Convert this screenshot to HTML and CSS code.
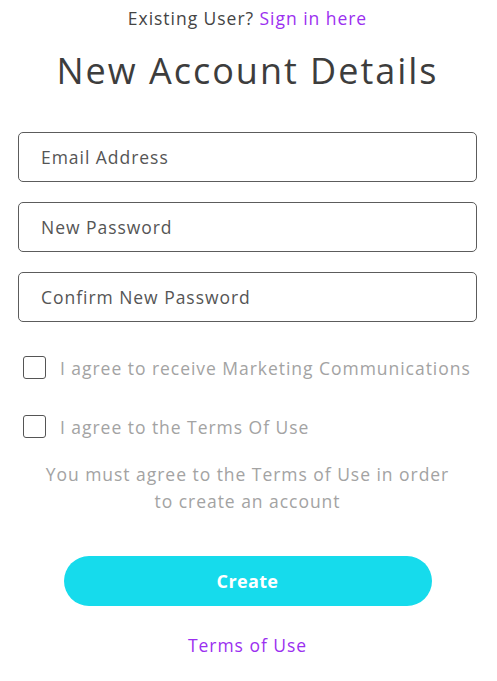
FILE: index.html
```html
<!DOCTYPE html>
<html lang="en">
<head>
<meta charset="utf-8">
<title>New Account Details</title>
<link rel="stylesheet" href="styles.css">
</head>
<body>
<main class="page">
  <p class="existing">Existing User? <a href="#" class="link">Sign in here</a></p>
  <h1 class="title">New Account Details</h1>
  <form class="form">
    <input class="field" type="email" placeholder="Email Address">
    <input class="field" type="password" placeholder="New Password">
    <input class="field" type="password" placeholder="Confirm New Password">
    <label class="check check-first"><input type="checkbox" class="box"><span>I agree to receive Marketing Communications</span></label>
    <label class="check"><input type="checkbox" class="box"><span>I agree to the Terms Of Use</span></label>
    <p class="notice">You must agree to the Terms of Use in order<br>to create an account</p>
    <button type="button" class="create">Create</button>
    <a href="#" class="link terms">Terms of Use</a>
  </form>
</main>
</body>
</html>
```
FILE: styles.css
```css
* { box-sizing: border-box; }
html, body { margin: 0; padding: 0; background: #fff; }
body {
  font-family: "Open Sans", "DejaVu Sans", sans-serif;
  font-size: 17.5px;
  letter-spacing: 0.055em;
  color: #444;
}
.page {
  display: flex;
  flex-direction: column;
  align-items: center;
  padding: 8px 20px 0 18px;
}
.existing {
  margin: 0;
  line-height: 20px;
  color: #444;
}
.link { color: #9b2ff0; text-decoration: none; }
.title {
  margin: 23px 0 0;
  font-size: 36px;
  line-height: 40px;
  font-weight: 400;
  letter-spacing: 0.055em;
  color: #3d3d3d;
}
.form {
  width: 100%;
  display: flex;
  flex-direction: column;
  margin-top: 41px;
}
.field {
  height: 50px;
  width: 100%;
  border: 1px solid #5c5c5c;
  border-radius: 5px;
  padding: 0 22px;
  font-family: inherit;
  font-size: 17.5px;
  letter-spacing: inherit;
  color: #444;
  margin-bottom: 20px;
  outline: none;
}
.field::placeholder { color: #555; }
.check {
  display: flex;
  align-items: center;
  gap: 14px;
  padding-left: 5px;
  color: #a3a3a3;
  line-height: 22px;
  margin-top: 13px;
}
.check-first { margin-top: 14px; }
.check + .check { margin-top: 36px; }
.box {
  appearance: none;
  -webkit-appearance: none;
  margin: 0;
  width: 23px;
  height: 23px;
  border: 1.5px solid #555;
  border-radius: 3px;
  background: #fff;
  flex: none;
}
.notice {
  margin: 23px 0 0;
  text-align: center;
  line-height: 27px;
  color: #a3a3a3;
}
.create {
  align-self: center;
  margin-top: 41px;
  width: 368px;
  height: 50px;
  border: none;
  border-radius: 25px;
  background: #16dbec;
  color: #fff;
  font-family: inherit;
  font-size: 18px;
  font-weight: 700;
  letter-spacing: 0.02em;
}
.terms {
  align-self: center;
  margin-top: 29px;
  line-height: 20px;
}
```
